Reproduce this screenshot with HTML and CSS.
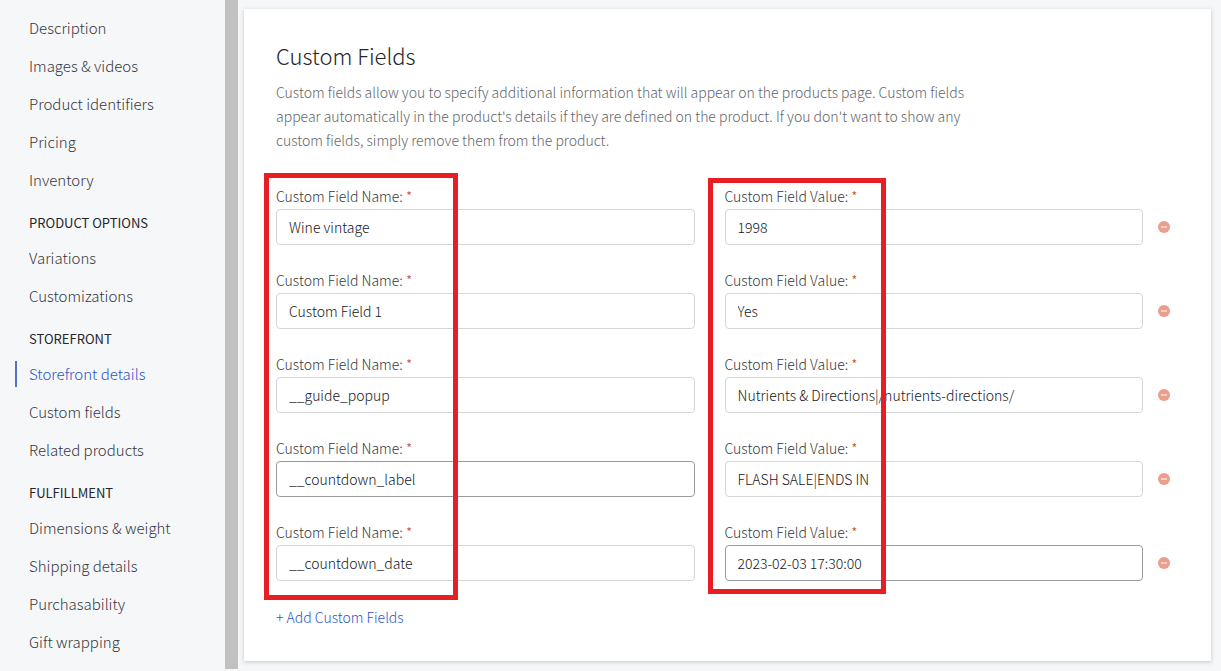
FILE: index.html
```html
<!DOCTYPE html>
<html lang="en">
<head>
<meta charset="utf-8">
<title>Custom Fields</title>
<link rel="stylesheet" href="styles.css">
</head>
<body>
<div class="app">
  <nav class="sidebar" aria-label="Product sections">
    <ul class="nav-list">
      <li><a class="nav-link" href="#">Listing</a></li>
      <li><a class="nav-link" href="#">Description</a></li>
      <li><a class="nav-link" href="#">Images &amp; videos</a></li>
      <li><a class="nav-link" href="#">Product identifiers</a></li>
      <li><a class="nav-link" href="#">Pricing</a></li>
      <li><a class="nav-link" href="#">Inventory</a></li>
    </ul>
    <h2 class="nav-heading">PRODUCT OPTIONS</h2>
    <ul class="nav-list">
      <li><a class="nav-link" href="#">Variations</a></li>
      <li><a class="nav-link" href="#">Customizations</a></li>
    </ul>
    <h2 class="nav-heading">STOREFRONT</h2>
    <ul class="nav-list">
      <li><a class="nav-link nav-link-active" href="#" aria-current="true">Storefront details</a></li>
      <li><a class="nav-link" href="#">Custom fields</a></li>
      <li><a class="nav-link" href="#">Related products</a></li>
    </ul>
    <h2 class="nav-heading">FULFILLMENT</h2>
    <ul class="nav-list">
      <li><a class="nav-link" href="#">Dimensions &amp; weight</a></li>
      <li><a class="nav-link" href="#">Shipping details</a></li>
      <li><a class="nav-link" href="#">Purchasability</a></li>
      <li><a class="nav-link" href="#">Gift wrapping</a></li>
    </ul>
  </nav>
  <div class="scrollbar"></div>
  <main class="content">
    <section class="card">
      <h1 class="card-title">Custom Fields</h1>
      <p class="card-text">Custom fields allow you to specify additional information that will appear on the products page. Custom fields appear automatically in the product's details if they are defined on the product. If you don't want to show any custom fields, simply remove them from the product.</p>
      <form class="fields">
        <div class="row">
          <div class="field"><label class="label" for="n1">Custom Field Name: <span class="required">*</span></label><input class="input" id="n1" type="text" value="Wine vintage"></div>
          <div class="field"><label class="label" for="v1">Custom Field Value: <span class="required">*</span></label><input class="input" id="v1" type="text" value="1998"></div>
          <button class="remove" type="button" aria-label="Remove"><svg class="remove-icon" viewBox="0 0 12 12"><circle cx="6" cy="6" r="6"/><rect x="3" y="5" width="6" height="2"/></svg></button>
        </div>
        <div class="row">
          <div class="field"><label class="label" for="n2">Custom Field Name: <span class="required">*</span></label><input class="input" id="n2" type="text" value="Custom Field 1"></div>
          <div class="field"><label class="label" for="v2">Custom Field Value: <span class="required">*</span></label><input class="input" id="v2" type="text" value="Yes"></div>
          <button class="remove" type="button" aria-label="Remove"><svg class="remove-icon" viewBox="0 0 12 12"><circle cx="6" cy="6" r="6"/><rect x="3" y="5" width="6" height="2"/></svg></button>
        </div>
        <div class="row">
          <div class="field"><label class="label" for="n3">Custom Field Name: <span class="required">*</span></label><input class="input" id="n3" type="text" value="__guide_popup"></div>
          <div class="field"><label class="label" for="v3">Custom Field Value: <span class="required">*</span></label><input class="input" id="v3" type="text" value="Nutrients &amp; Directions|/nutrients-directions/"></div>
          <button class="remove" type="button" aria-label="Remove"><svg class="remove-icon" viewBox="0 0 12 12"><circle cx="6" cy="6" r="6"/><rect x="3" y="5" width="6" height="2"/></svg></button>
        </div>
        <div class="row">
          <div class="field"><label class="label" for="n4">Custom Field Name: <span class="required">*</span></label><input class="input input-strong" id="n4" type="text" value="__countdown_label"></div>
          <div class="field"><label class="label" for="v4">Custom Field Value: <span class="required">*</span></label><input class="input" id="v4" type="text" value="FLASH SALE|ENDS IN"></div>
          <button class="remove" type="button" aria-label="Remove"><svg class="remove-icon" viewBox="0 0 12 12"><circle cx="6" cy="6" r="6"/><rect x="3" y="5" width="6" height="2"/></svg></button>
        </div>
        <div class="row">
          <div class="field"><label class="label" for="n5">Custom Field Name: <span class="required">*</span></label><input class="input" id="n5" type="text" value="__countdown_date"></div>
          <div class="field"><label class="label" for="v5">Custom Field Value: <span class="required">*</span></label><input class="input input-strong" id="v5" type="text" value="2023-02-03 17:30:00"></div>
          <button class="remove" type="button" aria-label="Remove"><svg class="remove-icon" viewBox="0 0 12 12"><circle cx="6" cy="6" r="6"/><rect x="3" y="5" width="6" height="2"/></svg></button>
        </div>
        <div class="mark mark-names"></div>
        <div class="mark mark-values"></div>
      </form>
      <button class="add" type="button">+ Add Custom Fields</button>
    </section>
  </main>
</div>
</body>
</html>
```
FILE: styles.css
```css
* { box-sizing: border-box; }

body {
  margin: 0;
  background: #f6f7f9;
  color: #24262c;
  font-family: "Noto Sans CJK SC", "Noto Sans", sans-serif;
  font-size: 14px;
  font-weight: 300;
  line-height: 24px;
}

.app {
  display: flex;
  height: 100vh;
  overflow: hidden;
}

/* Side navigation */
.sidebar {
  flex: 0 0 225px;
  padding-left: 15px;
  margin-top: -23px;
}
.nav-list {
  display: flex;
  flex-direction: column;
  gap: 12px;
  margin: 0;
  padding: 0;
  list-style: none;
}
.nav-link {
  display: block;
  padding-left: 12px;
  border-left: 2px solid transparent;
  color: #36383e;
  font-size: 15px;
  line-height: 26px;
  text-decoration: none;
}
.nav-link-active {
  border-left-color: #5273c2;
  color: #2c55c8;
}
.nav-heading {
  margin: 20px 0 12px;
  padding-left: 14px;
  font-size: 13px;
  font-weight: 400;
  line-height: 20px;
}

.scrollbar {
  flex: 0 0 13px;
  margin-bottom: 2px;
  background: #c1c1c1;
}

/* Main card */
.content {
  flex: 1;
  padding: 9px 10px 10px 6px;
}
.card {
  padding: 32px 32px 32px;
  background: #fff;
  box-shadow: 0 1px 4px rgba(49, 52, 64, 0.25);
}
.card-title {
  margin: 0;
  font-size: 22px;
  font-weight: 300;
  line-height: 28px;
}
.card-text {
  max-width: 700px;
  margin: 11px 0 0;
  color: #64666a;
}

.fields {
  position: relative;
  display: flex;
  flex-direction: column;
  gap: 24px;
  margin-top: 32px;
}
.row {
  display: grid;
  grid-template-columns: 1fr 1fr 12px;
  column-gap: 30px;
  align-items: end;
  margin-right: -6px;
}
.label {
  display: block;
  margin-bottom: 1px;
  color: #36383e;
}
.required { color: #cc4325; }
.input {
  display: block;
  width: 100%;
  height: 36px;
  padding: 0 12px;
  border: 1px solid #d5d6da;
  border-radius: 4px;
  background: #fff;
  color: #15171c;
  font: inherit;
}
.input-strong { border-color: #999ba2; }
.remove {
  display: flex;
  align-items: center;
  height: 36px;
  margin-left: -15px;
  padding: 0;
  border: 0;
  background: none;
}
.remove-icon {
  width: 12px;
  height: 12px;
}
.remove-icon circle { fill: #ec9d8b; }
.remove-icon rect { fill: #f8cfc5; }
.fields { gap: 23px; }

/* Highlight frames drawn over the form */
.mark {
  position: absolute;
  border: 5px solid #e81e25;
  pointer-events: none;
}
.mark-names {
  top: -11px;
  left: -12px;
  width: 194px;
  height: 427px;
}
.mark-values {
  top: -6px;
  left: 432px;
  width: 178px;
  height: 416px;
}

.add {
  display: block;
  margin-top: 24px;
  padding: 0;
  border: 0;
  background: none;
  color: #2c55c8;
  font: inherit;
}
```
